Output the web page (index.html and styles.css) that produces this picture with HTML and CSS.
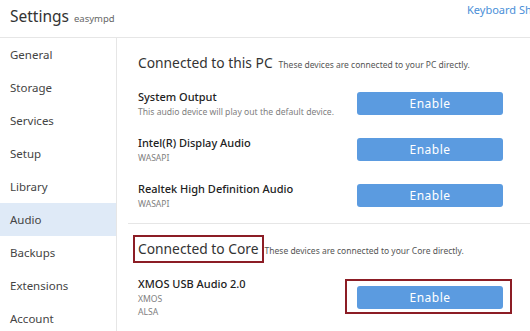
FILE: index.html
```html
<!DOCTYPE html>
<html lang="en">
<head>
  <meta charset="UTF-8">
  <title>Settings</title>
  <link rel="stylesheet" href="styles.css">
</head>
<body>
  <header class="topbar">
    <div class="title">
      <h1>Settings</h1>
      <span class="zone">easympd</span>
    </div>
    <a class="shortcuts" href="#">Keyboard Shortcuts</a>
  </header>

  <div class="main">
    <nav class="sidebar">
      <a class="nav-item" href="#">General</a>
      <a class="nav-item" href="#">Storage</a>
      <a class="nav-item" href="#">Services</a>
      <a class="nav-item" href="#">Setup</a>
      <a class="nav-item" href="#">Library</a>
      <a class="nav-item active" href="#">Audio</a>
      <a class="nav-item" href="#">Backups</a>
      <a class="nav-item" href="#">Extensions</a>
      <a class="nav-item" href="#">Account</a>
    </nav>

    <div class="content">
      <section class="group">
        <div class="group-head">
          <h2>Connected to this PC</h2>
          <span class="group-note">These devices are connected to your PC directly.</span>
        </div>
        <div class="device">
          <div class="device-info">
            <div class="device-name">System Output</div>
            <div class="device-desc">This audio device will play out the default device.</div>
          </div>
          <button class="btn">Enable</button>
        </div>
        <div class="device">
          <div class="device-info">
            <div class="device-name">Intel(R) Display Audio</div>
            <div class="device-desc">WASAPI</div>
          </div>
          <button class="btn">Enable</button>
        </div>
        <div class="device">
          <div class="device-info">
            <div class="device-name">Realtek High Definition Audio</div>
            <div class="device-desc">WASAPI</div>
          </div>
          <button class="btn">Enable</button>
        </div>
      </section>

      <section class="group core">
        <div class="group-head">
          <h2 class="marked">Connected to Core</h2>
          <span class="group-note">These devices are connected to your Core directly.</span>
        </div>
        <div class="device">
          <div class="device-info">
            <div class="device-name">XMOS USB Audio 2.0</div>
            <div class="device-desc">XMOS</div>
            <div class="device-desc">ALSA</div>
          </div>
          <button class="btn marked-btn">Enable</button>
        </div>
      </section>
    </div>
  </div>
</body>
</html>
```

FILE: styles.css
```css
body {
  margin: 0;
  font-family: 'Noto Sans', sans-serif;
  color: #333;
  background: #fff;
  overflow: hidden;
}

.topbar {
  display: flex;
  align-items: flex-start;
  height: 37px;
  border-bottom: 1px solid #e6e6e6;
}

.title {
  flex: 1;
  display: flex;
  align-items: baseline;
  padding: 5px 0 0 10px;
}

.title h1 {
  margin: 0;
  font-size: 15.5px;
  font-weight: normal;
  color: #333;
}

.zone {
  margin-left: 5px;
  font-size: 9.5px;
  color: #666;
}

.shortcuts {
  width: 63px;
  overflow: hidden;
  white-space: nowrap;
  padding-top: 2px;
  font-size: 11px;
  color: #4a8fd8;
  text-decoration: none;
}

.main {
  display: flex;
}

.sidebar {
  width: 116px;
  flex-shrink: 0;
  border-right: 1px solid #e6e6e6;
  height: 300px;
}

.nav-item {
  display: flex;
  align-items: center;
  height: 33px;
  padding-left: 10px;
  font-size: 11.5px;
  color: #444;
  text-decoration: none;
}

.nav-item.active {
  background: #dfeaf7;
}

.content {
  flex: 1;
  padding: 0 0 0 11px;
}

.group {
  padding-bottom: 3px;
  border-bottom: 1px solid #e6e6e6;
}

.group-head {
  display: flex;
  align-items: baseline;
  padding: 14px 0 6px 10px;
  line-height: 22px;
}

.core .group-head {
  padding-bottom: 7px;
}

.group-head h2 {
  margin: 0;
  font-size: 13.8px;
  font-weight: normal;
  color: #333;
}

.group-note {
  margin-left: 6px;
  font-size: 8.5px;
  color: #555;
}

.marked {
  position: relative;
}

.marked::after {
  content: "";
  position: absolute;
  inset: -3px -5px -3px -5px;
  border: 2px solid #8c1d25;
}

.device {
  display: flex;
  align-items: center;
  padding: 6px 27px 9px 10px;
}

.device-info {
  flex: 1;
}

.device-name {
  font-size: 11px;
  font-weight: 500;
  line-height: 18px;
  color: #222;
}

.device-desc {
  font-size: 8.6px;
  line-height: 13px;
  color: #808080;
}

.btn {
  position: relative;
  width: 146px;
  height: 23px;
  border: none;
  border-radius: 3px;
  background: #5b9be0;
  color: #fff;
  font-family: 'Noto Sans', sans-serif;
  font-size: 12px;
  letter-spacing: 0.5px;
  cursor: pointer;
}

.marked-btn::after {
  content: "";
  position: absolute;
  inset: -7px -9px -5px -12px;
  border: 2px solid #8c1d25;
}
```
